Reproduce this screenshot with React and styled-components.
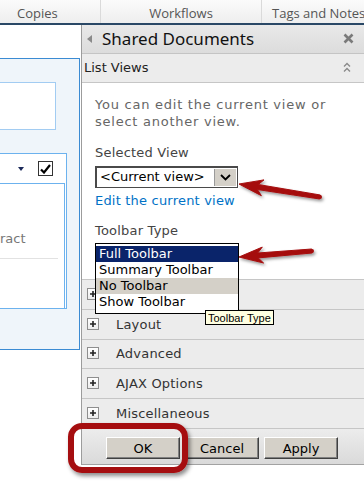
import React from "react";
import styled, { createGlobalStyle } from "styled-components";

const GlobalStyle = createGlobalStyle`
  html, body { margin: 0; padding: 0; background: #fff; }
  body { font-family: "DejaVu Sans", Verdana, sans-serif; }
`;

const Page = styled.div`
  position: relative;
  width: 364px;
  height: 493px;
  overflow: hidden;
  background: #fff;
`;

// top ribbon tabs
const TabBar = styled.div`
  display: flex;
  height: 23px;
  border-bottom: 2px solid #2a4866;
  background: linear-gradient(#fbfbfb, #eeeeee);
`;

const Tab = styled.div`
  flex: ${(p) => (p.$width ? `0 0 ${p.$width}px` : "1")};
  display: flex;
  align-items: center;
  justify-content: ${(p) => (p.$center ? "center" : "flex-start")};
  padding-left: ${(p) => p.$pad || 0}px;
  padding-top: 3px;
  box-sizing: border-box;
  border-right: ${(p) => (p.$last ? "none" : "1px solid #dadada")};
  font-family: "Open Sans", "Noto Sans", sans-serif;
  font-size: 13px;
  color: #555;
  white-space: nowrap;
`;

const Main = styled.div`
  display: flex;
  height: 440px;
`;

// page content behind the tool pane
const LeftArea = styled.div`
  flex: 0 0 81px;
  padding-top: 33px;
  box-sizing: border-box;
`;

const OuterBox = styled.div`
  width: 80px;
  height: 292px;
  box-sizing: border-box;
  border: 1px solid #3b8bd3;
  border-left: none;
  background: #eff5fa;
  padding-top: 23px;
`;

const InfoBox = styled.div`
  width: 56px;
  height: 48px;
  box-sizing: border-box;
  border: 1px solid #a2ccf2;
  border-left: none;
  background: #fff;
`;

const WebPart = styled.div`
  margin-top: 23px;
  width: 67px;
  height: 156px;
  box-sizing: border-box;
  border: 1px solid #6cb2ee;
  border-left: none;
  background: #fff;
  display: flex;
  flex-direction: column;
`;

const WebPartHead = styled.div`
  height: 29px;
  display: flex;
  align-items: center;
  padding-left: 18px;
  gap: 14px;
`;

const CheckBox = styled.div`
  width: 15px;
  height: 15px;
  box-sizing: border-box;
  border: 1px solid #333;
  display: flex;
  align-items: center;
  justify-content: center;
  background: #fff;
`;

const WebPartBody = styled.div`
  flex: 1;
  width: 65px;
  box-sizing: border-box;
  border: 1px solid #6cb2ee;
  border-left: none;
  border-bottom: none;
  padding-top: 46px;
`;

const FadedText = styled.div`
  font-size: 13px;
  color: #777;
  line-height: 18px;
  padding-bottom: 10px;
  width: 58px;
  border-bottom: 1px solid #e2e2e2;
`;

// tool pane
const Pane = styled.div`
  position: relative;
  flex: 1;
  border-left: 1px solid #9c9c9c;
  display: flex;
  flex-direction: column;
  background: #fff;
`;

const PaneHeader = styled.div`
  height: 29px;
  display: flex;
  align-items: center;
  padding: 0 10px 0 5px;
  background: linear-gradient(#e9e9e9, #dcdcdc);
  border-bottom: 1px solid #c4c4c4;
  box-sizing: border-box;
`;

const PaneTitle = styled.div`
  flex: 1;
  margin-left: 10px;
  font-family: "Noto Sans", "Open Sans", sans-serif;
  font-size: 17px;
  color: #111;
  line-height: 1;
`;

const SectionHead = styled.div`
  height: 29px;
  display: flex;
  align-items: center;
  padding: 0 13px 0 2px;
  box-sizing: border-box;
  background: #ececec;
  border-bottom: 1px solid #c6c6c6;
  font-size: 13px;
  color: #222;
  justify-content: space-between;
`;

const Body = styled.div`
  height: 196px;
  padding: 13px 0 0 13px;
  box-sizing: border-box;
  font-size: 13px;
  line-height: 17px;
  letter-spacing: 0.2px;
`;

const Desc = styled.p`
  margin: 0;
  color: #666;
  width: 250px;
  letter-spacing: 0.75px;
`;

const FieldLabel = styled.div`
  margin-top: ${(p) => p.$top}px;
  color: #444;
`;

const SelectBox = styled.div`
  margin-top: 5px;
  width: 143px;
  height: 22px;
  box-sizing: border-box;
  border: 2px solid #4a4a4a;
  border-right-width: 1px;
  border-bottom-width: 1px;
  display: flex;
  background: #fff;
`;

const SelectValue = styled.div`
  flex: 1;
  padding-left: 3px;
  line-height: 18px;
  color: #000;
  letter-spacing: 0;
`;

const SelectArrow = styled.div`
  width: 21px;
  margin: 1px 1px 1px 0;
  background: #d4d0c8;
  border-left: 1px solid #9a9a9a;
  display: flex;
  align-items: center;
  justify-content: center;
`;

const Link = styled.a`
  display: block;
  margin-top: 4px;
  color: #0072c6;
  text-decoration: none;
`;

const ListBox = styled.div`
  position: relative;
  z-index: 2;
  margin-top: 4px;
  width: 144px;
  box-sizing: border-box;
  border: 1px solid #000;
  background: #fff;
  padding: 2px 0 3px;
  letter-spacing: 0;
`;

const Option = styled.div`
  height: 16px;
  line-height: 16px;
  padding-left: 3px;
  color: ${(p) => (p.$selected ? "#fff" : "#000")};
  background: ${(p) => (p.$selected ? "#0a246a" : p.$hover ? "#d4d0c8" : "transparent")};
`;

const GroupRow = styled.div`
  height: 30px;
  box-sizing: border-box;
  border-top: 1px solid #c6c6c6;
  background: #ececec;
  display: flex;
  align-items: center;
  padding-left: 5px;
  font-size: 13px;
  letter-spacing: 0.2px;
  color: #333;
`;

const PlusBox = styled.div`
  width: 12px;
  height: 12px;
  box-sizing: border-box;
  border: 1px solid #8e8e8e;
  background: linear-gradient(#fff, #ececec);
  display: flex;
  align-items: center;
  justify-content: center;
  margin-right: 17px;
  margin-top: -1px;
`;

const Footer = styled.div`
  height: 37px;
  box-sizing: border-box;
  border-top: 1px solid #c6c6c6;
  border-bottom: 1px solid #a2a2a2;
  background: linear-gradient(#ececec, #dadada);
  display: flex;
  justify-content: flex-end;
  align-items: flex-start;
  gap: 5px;
  padding: 8px 26px 0 0;
`;

const Button = styled.button`
  width: 74px;
  height: 22px;
  padding: 0;
  background: #d4d0c8;
  border: 1px solid;
  border-color: #fff #404040 #404040 #fff;
  box-shadow: inset -1px -1px #808080;
  font-family: "DejaVu Sans", Verdana, sans-serif;
  font-size: 13px;
  color: #000;
`;

const Tooltip = styled.div`
  position: absolute;
  left: 123px;
  top: 285px;
  z-index: 3;
  padding: 0 2px;
  height: 15px;
  line-height: 14px;
  box-sizing: border-box;
  border: 1px solid #000;
  background: #ffffe1;
  font-family: "Liberation Sans", Arial, sans-serif;
  font-size: 11px;
  color: #000;
`;

// annotation callouts on top of the screenshot
const Overlay = styled.svg`
  position: absolute;
  left: 0;
  top: 0;
  z-index: 5;
  pointer-events: none;
`;

const Highlight = styled.div`
  position: absolute;
  left: 68px;
  top: 423px;
  width: 120px;
  height: 50px;
  box-sizing: border-box;
  border: 6px solid #a50e10;
  border-radius: 14px;
  box-shadow: 2px 3px 4px rgba(0, 0, 0, 0.45);
  z-index: 5;
`;

const arrowPoints = (tail, tip) => {
  const dx = tip[0] - tail[0];
  const dy = tip[1] - tail[1];
  const len = Math.hypot(dx, dy);
  const ux = dx / len;
  const uy = dy / len;
  const nx = -uy;
  const ny = ux;
  const headLen = 24;
  const headW = 8;
  const base = [tip[0] - ux * headLen, tip[1] - uy * headLen];
  const neck = [tip[0] - ux * (headLen - 5), tip[1] - uy * (headLen - 5)];
  const pts = [
    tip,
    [base[0] + nx * headW, base[1] + ny * headW],
    [neck[0] + nx * 2.5, neck[1] + ny * 2.5],
    [tail[0] + nx * 2, tail[1] + ny * 2],
    [tail[0] - nx * 2, tail[1] - ny * 2],
    [neck[0] - nx * 2.5, neck[1] - ny * 2.5],
    [base[0] - nx * headW, base[1] - ny * headW],
  ];
  return pts.map((p) => p.map((v) => v.toFixed(1)).join(",")).join(" ");
};

const Arrow = ({ tail, tip }) => (
  <g filter="url(#shadow)">
    <polygon points={arrowPoints(tail, tip)} fill="#a50e10" strokeLinejoin="round" stroke="#a50e10" strokeWidth="1" />
    <circle cx={tail[0]} cy={tail[1]} r="2" fill="#a50e10" />
  </g>
);

const groups = ["Appearance", "Layout", "Advanced", "AJAX Options", "Miscellaneous"];
const toolbarOptions = ["Full Toolbar", "Summary Toolbar", "No Toolbar", "Show Toolbar"];

export default function App() {
  return (
    <>
      <GlobalStyle />
      <Page>
        <TabBar>
          <Tab $width={101} $pad={17}>Copies</Tab>
          <Tab $width={161} $center>Workflows</Tab>
          <Tab $pad={10} $last>Tags and Notes</Tab>
        </TabBar>
        <Main>
          <LeftArea>
            <OuterBox>
              <InfoBox />
              <WebPart>
                <WebPartHead>
                  <svg width="6" height="4" viewBox="0 0 6 4">
                    <path d="M0 0h6L3 4z" fill="#1c2a5a" />
                  </svg>
                  <CheckBox>
                    <svg width="11" height="10" viewBox="0 0 11 10">
                      <path d="M1 5.5l3 3L10 1" fill="none" stroke="#000" strokeWidth="2.2" />
                    </svg>
                  </CheckBox>
                </WebPartHead>
                <WebPartBody>
                  <FadedText>ract</FadedText>
                </WebPartBody>
              </WebPart>
            </OuterBox>
          </LeftArea>

          <Pane>
            <PaneHeader>
              <svg width="5" height="8" viewBox="0 0 5 8">
                <path d="M5 0v8L0 4z" fill="#8a8a8a" />
              </svg>
              <PaneTitle>Shared Documents</PaneTitle>
              <svg width="11" height="11" viewBox="0 0 11 11">
                <path d="M1.5 1.5l8 8M9.5 1.5l-8 8" stroke="#7a7a7a" strokeWidth="2.6" />
              </svg>
            </PaneHeader>
            <SectionHead>
              <span>List Views</span>
              <svg width="8" height="11" viewBox="0 0 8 11">
                <path d="M1 4.5l3-3 3 3M1 9.5l3-3 3 3" fill="none" stroke="#8a8a8a" strokeWidth="1.4" />
              </svg>
            </SectionHead>
            <Body>
              <Desc>You can edit the current view or select another view.</Desc>
              <FieldLabel $top={14}>Selected View</FieldLabel>
              <SelectBox>
                <SelectValue>&lt;Current view&gt;</SelectValue>
                <SelectArrow>
                  <svg width="11" height="7" viewBox="0 0 11 7">
                    <path d="M1 1l4.5 4.5L10 1" fill="none" stroke="#000" strokeWidth="1.8" />
                  </svg>
                </SelectArrow>
              </SelectBox>
              <Link href="#">Edit the current view</Link>
              <FieldLabel $top={13}>Toolbar Type</FieldLabel>
              <ListBox>
                {toolbarOptions.map((o, i) => (
                  <Option key={o} $selected={i === 0} $hover={i === 2}>
                    {o}
                  </Option>
                ))}
              </ListBox>
            </Body>
            {groups.map((g) => (
              <GroupRow key={g}>
                <PlusBox>
                  <svg width="6" height="6" viewBox="0 0 6 6">
                    <path d="M0 3h6M3 0v6" stroke="#222" strokeWidth="1.6" />
                  </svg>
                </PlusBox>
                {g}
              </GroupRow>
            ))}
            <Footer>
              <Button>OK</Button>
              <Button>Cancel</Button>
              <Button>Apply</Button>
            </Footer>
            <Tooltip>Toolbar Type</Tooltip>
          </Pane>
        </Main>

        <Overlay width="364" height="493">
          <defs>
            <filter id="shadow" x="-20%" y="-50%" width="140%" height="200%">
              <feDropShadow dx="1.5" dy="2" stdDeviation="1.5" floodColor="#000" floodOpacity="0.4" />
            </filter>
          </defs>
          <Arrow tail={[320, 197]} tip={[239, 184]} />
          <Arrow tail={[312, 251]} tip={[239, 257]} />
        </Overlay>
        <Highlight />
      </Page>
    </>
  );
}
